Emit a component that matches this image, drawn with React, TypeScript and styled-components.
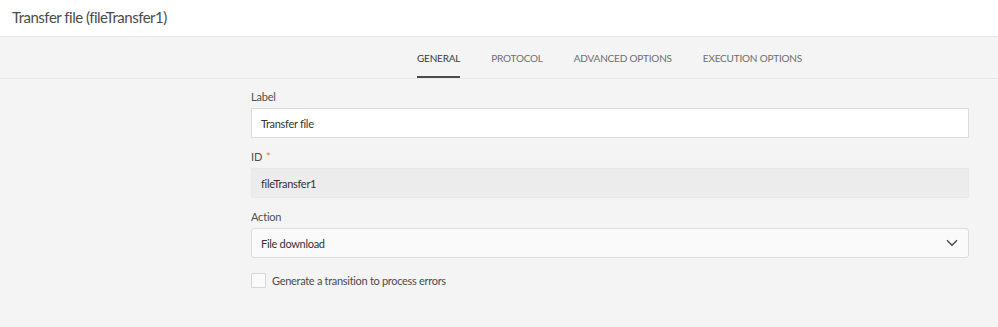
import React, { useState } from "react";
import styled, { createGlobalStyle } from "styled-components";

const GlobalStyle = createGlobalStyle`
  html, body {
    margin: 0;
    padding: 0;
    background: #f4f4f4;
    font-family: Lato, "Open Sans", sans-serif;
    color: #4b4b4b;
  }
`;

const Page = styled.div`
  width: 998px;
  height: 327px;
  display: flex;
  flex-direction: column;
  background: #f4f4f4;
  overflow: hidden;
`;

const Header = styled.div`
  height: 37px;
  background: #fff;
  border-bottom: 1px solid #e6e6e6;
  display: flex;
  align-items: center;
  padding: 0 0 2px 12px;
  box-sizing: border-box;
  font-size: 15px;
  letter-spacing: -0.5px;
  color: #4b4b4b;
`;

const TabBar = styled.div`
  height: 42px;
  border-bottom: 1px solid #e9e9e9;
  display: flex;
  justify-content: center;
  padding-left: 221px;
  box-sizing: border-box;
  gap: 31px;
`;

const Tab = styled.div<{ active?: boolean }>`
  display: flex;
  align-items: center;
  font-size: 10px;
  letter-spacing: -0.2px;
  color: ${(p) => (p.active ? "#3a3a3a" : "#6e6e6e")};
  border-bottom: 2px solid ${(p) => (p.active ? "#4b4b4b" : "transparent")};
  padding-top: 3px;
  cursor: pointer;
`;

const Form = styled.div`
  padding: 8px 29px 0 251px;
  display: flex;
  flex-direction: column;
`;

const FieldLabel = styled.div`
  font-size: 11px;
  letter-spacing: -0.2px;
  color: #505050;
  height: 18px;
  display: flex;
  align-items: center;
  margin-bottom: 3px;
  span {
    color: #e68619;
    margin-left: 4px;
  }
`;

const Field = styled.div<{ readOnly?: boolean; select?: boolean }>`
  height: 30px;
  box-sizing: border-box;
  border: 1px solid ${(p) => (p.readOnly ? "#e8e8e8" : "#dcdcdc")};
  background: ${(p) => (p.readOnly ? "#ececec" : p.select ? "#fafafa" : "#fff")};
  border-radius: ${(p) => (p.select ? "3px" : "0")};
  display: flex;
  align-items: center;
  justify-content: space-between;
  padding: 0 10px 0 9px;
  font-size: 11px;
  letter-spacing: -0.3px;
  color: #333;
  margin-bottom: 9px;
`;

const CheckRow = styled.label`
  display: flex;
  align-items: center;
  gap: 6px;
  margin-top: 6px;
  font-size: 11px;
  letter-spacing: -0.3px;
  color: #4b4b4b;
`;

const Box = styled.div`
  width: 15px;
  height: 15px;
  box-sizing: border-box;
  border: 1px solid #d5d5d5;
  background: #fafafa;
  border-radius: 1px;
`;

const tabs = ["GENERAL", "PROTOCOL", "ADVANCED OPTIONS", "EXECUTION OPTIONS"];

export default function App() {
  const [active, setActive] = useState(0);
  return (
    <Page>
      <GlobalStyle />
      <Header>Transfer file (fileTransfer1)</Header>
      <TabBar>
        {tabs.map((t, i) => (
          <Tab key={t} active={i === active} onClick={() => setActive(i)}>
            {t}
          </Tab>
        ))}
      </TabBar>
      <Form>
        <FieldLabel>Label</FieldLabel>
        <Field>Transfer file</Field>
        <FieldLabel>
          ID<span>*</span>
        </FieldLabel>
        <Field readOnly>fileTransfer1</Field>
        <FieldLabel>Action</FieldLabel>
        <Field select>
          File download
          <svg width="12" height="8" viewBox="0 0 12 8">
            <path d="M1 1.2 L6 6.2 L11 1.2" fill="none" stroke="#4b4b4b" strokeWidth="1.5" />
          </svg>
        </Field>
        <CheckRow>
          <Box />
          Generate a transition to process errors
        </CheckRow>
      </Form>
    </Page>
  );
}
